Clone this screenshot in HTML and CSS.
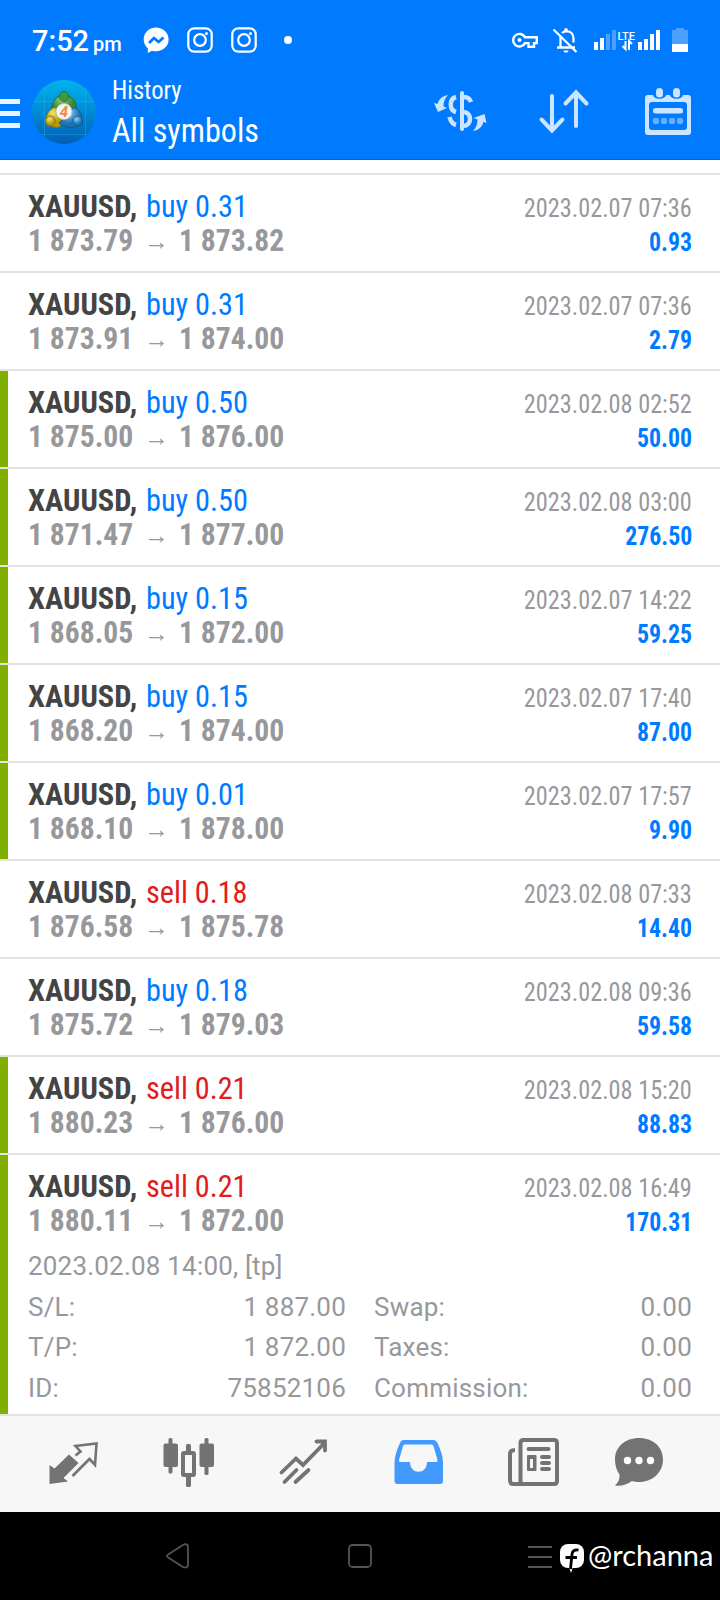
FILE: index.html
```html
<!DOCTYPE html>
<html lang="en">
<head>
<meta charset="utf-8">
<title>History</title>
<link rel="stylesheet" href="styles.css">
</head>
<body>
<header class="top">
  <div class="status">
    <div class="clock">7:52<small>pm</small></div>
    <svg class="notif" width="160" height="30" viewBox="140 25 160 30">
      <path fill="#fff" d="M156 27.500c-7 0-12.300 5.200-12.300 12 0 3.600 1.600 6.500 4.100 8.700v4.800l4.200-2.300c1.300.4 2.600.5 4 .5 7 0 12.600-5 12.600-11.700S163 27.500 156 27.500z"/>
      <path d="M149 43l5-5 4.500 4 5-4.500" fill="none" stroke="#007bff" stroke-width="2.800" stroke-linejoin="round"/>
      <g id="insta" fill="none" stroke="#fff" stroke-width="2.200"><rect x="188.300" y="28.300" width="23.400" height="23.400" rx="6"/><circle cx="200" cy="40" r="5.800"/><circle cx="206.500" cy="33.500" r="1.500" fill="#fff" stroke="none"/></g>
      <use href="#insta" x="44"/>
      <circle cx="288" cy="40" r="4" fill="#fff"/>
    </svg>
    <svg class="system" width="186" height="30" viewBox="506 25 186 30">
      <g fill="none" stroke="#fff" stroke-width="2.400"><path d="M525 37.300a6.300 6.300 0 1 0 0 5.800h3.500v3.700h5.500v-3.700h2.700v-5.800z"/></g><circle cx="519.500" cy="40" r="2" fill="#fff"/>
      <path d="M560.500 36v11.500M557 47.500h18M562 33c2-1.800 3-1.600 5-1.600 4 0 6.500 3 6.500 7v4" fill="none" stroke="#fff" stroke-width="2.300"/>
      <path d="M564 31c0-4 4-4 4 0zM563.500 50.500h5c-.5 3-4.500 3-5 0z" fill="#fff"/>
      <path d="M553.500 29.500L576.500 52" stroke="#fff" stroke-width="2.300"/>
      <path d="M594 42h4v8h-4zM600 38h4v12h-4zM638 42h4v8h-4zM644 39h4v11h-4zM650 34h4v16h-4zM656 30h4v20h-4z" fill="#fff"/>
      <path d="M606 34h4v16h-4zM612 30h4v20h-4z" fill="#4ca0ff"/>
      <text x="617.500" y="40" class="lte">LTE</text>
      <path d="M625.500 41v8l-3-3M629 50v-9l3 3" fill="none" stroke="#fff" stroke-width="2"/>
      <path d="M672 30h4v-2h8v2h4v14h-16z" fill="#4ca0ff"/><path d="M672 44h16v8h-16z" fill="#fff"/>
    </svg>
  </div>
  <div class="appbar">
    <svg class="menu" width="20" height="30" viewBox="0 0 20 30"><path d="M0 0h20v5H0zM0 12h20v5H0zM0 24h20v5H0z" fill="#e8f3ff"/></svg>
    <svg class="logo" width="64" height="64" viewBox="0 0 64 64">
      <defs>
        <linearGradient id="bg" x2="0" y2="1"><stop offset="0" stop-color="#00b4ea"/><stop offset=".55" stop-color="#0086d2"/><stop offset="1" stop-color="#005fb4"/></linearGradient>
        <radialGradient id="gr" cx=".4" cy=".25"><stop offset="0" stop-color="#8fcb70"/><stop offset="1" stop-color="#2f8a34"/></radialGradient>
        <radialGradient id="ye" cx=".4" cy=".3"><stop offset="0" stop-color="#f3e36a"/><stop offset="1" stop-color="#b59a10"/></radialGradient>
        <radialGradient id="bl" cx=".4" cy=".3"><stop offset="0" stop-color="#8ccdf0"/><stop offset="1" stop-color="#1b74b8"/></radialGradient>
        <clipPath id="disc"><circle cx="32" cy="32" r="32"/></clipPath>
      </defs>
      <g clip-path="url(#disc)"><path fill="url(#bg)" d="M0 0h64v64H0z"/><path d="M12.500 0v64M53.500 0v64M0 21.500h64M0 54.500h64" stroke="#3fb2e8" stroke-opacity=".35"/></g>
      <path d="M20 29c0-8 4-13 12-14 8 1 13 6 12 14l-5 5H24z" fill="url(#gr)" stroke="#256b35"/>
      <path d="M14 44c-1-8 2-14 9-17l8 10-3 10c-5 1-9 0-14-3z" fill="url(#ye)" stroke="#7c7119"/>
      <path d="M50 44c1-8-2-14-8-17l-9 10-6 6c6 5 15 6 23 1z" fill="url(#bl)" stroke="#17588b"/>
      <ellipse cx="32" cy="16.500" rx="4.500" ry="5" fill="#3f9a48" stroke="#256b35" stroke-width=".8"/>
      <circle cx="18.500" cy="41" r="5" fill="url(#ye)" stroke="#7c7119" stroke-width=".8"/>
      <circle cx="45.500" cy="41" r="5" fill="url(#bl)" stroke="#17588b" stroke-width=".8"/>
      <circle cx="32" cy="31.500" r="8" fill="#f4f4f4" stroke="#bbb" stroke-width=".8"/>
      <text x="32" y="37" text-anchor="middle" class="four">4</text>
    </svg>
    <div class="titles"><div class="t1"><span>History</span></div><div class="t2"><span>All symbols</span></div></div>
    <svg class="tools" width="260" height="52" viewBox="432 86 260 52">
      <g fill="none" stroke="#cce5ff" stroke-linecap="round" stroke-width="4">
        <path d="M462 93v36" />
        <path d="M456 97c-7 2-7 13 0 15M449.500 117c1 4 3 7 6.500 8M464 97c4 0 6 2 7 5M464 112c8 1 8 13 0 14" stroke-width="4.500" stroke-linecap="butt"/>
        <path d="M552 96v34M541.500 119.500l10.500 11 10.500-11M576 126V93M565.500 103.500l10.500-11 10.500 11"/>
      </g>
      <path d="M448 95c-6 1-9 4-10.500 9l-3.500-1 4 9 9-4-3.500-1.500c0-4 1-8 4.500-11.500zM473 131c6-1 9-4 10.500-9l3 1-2-9-11 4 4 1.500c0 4-1 8-4.500 11.500z" fill="#cce5ff"/>
      <path fill="#cce5ff" fill-rule="evenodd" d="M648 95h5c1 5 12 5 13 0h4c1 5 12 5 13 0h5a3 3 0 0 1 3 3v34a3 3 0 0 1-3 3h-40a3 3 0 0 1-3-3V98a3 3 0 0 1 3-3zM652 102a3 3 0 0 0-3 3v22a3 3 0 0 0 3 3h32a3 3 0 0 0 3-3v-22a3 3 0 0 0-3-3z"/>
      <rect x="656" y="88" width="7" height="9.500" rx="3.500" fill="#cce5ff"/><rect x="673" y="88" width="7" height="9.500" rx="3.500" fill="#cce5ff"/>
      <rect x="653" y="108" width="30" height="5.500" rx="2.500" fill="#cce5ff"/>
      <g fill="#66b0ff"><circle cx="656" cy="121" r="3.200"/><circle cx="664" cy="121" r="3.200"/><circle cx="672" cy="121" r="3.200"/><circle cx="680" cy="121" r="3.200"/></g>
    </svg>
  </div>
</header>
<main class="deals" id="deals"></main>
<nav class="tabs">
  <svg width="720" height="96" viewBox="0 1416 720 96">
    <g fill="#737373">
      <path d="M49.500 1465l5 3.500 14.500-14 9.500 8.500-15 15 4.500 3.500-18.500 2.500z"/>
      <path d="M75.500 1455.500l5-4-5-5.500 21-2.500-1.500 21.500-5.500-6-17 17" fill="none" stroke="#737373" stroke-width="2.600"/>
      <rect x="163.500" y="1443.500" width="14.500" height="23.500" rx="2"/><rect x="168.500" y="1438" width="4" height="35.500" rx="1.500"/>
      <rect x="199.500" y="1443.500" width="14.500" height="23.500" rx="2"/><rect x="204.500" y="1438" width="4" height="37" rx="1.500"/>
      <rect x="186" y="1444" width="5" height="43" rx="1.500"/><rect x="183" y="1453" width="11" height="22" rx="1" fill="#f7f7f7" stroke="#737373" stroke-width="4"/>
      <path d="M281.500 1472.500l14.500-14 7 6.500 21-21.500M316.500 1441.500h8.500v9M284.500 1482l12-12M295.500 1482l13-12" fill="none" stroke="#737373" stroke-width="3.800" stroke-linecap="round"/>
    </g>
    <path fill="#429aff" fill-rule="evenodd" d="M404 1440h29q3 0 4.500 3c3 7 5.500 13 5.500 20v18q0 3-3 3h-42.500q-3 0-3-3v-18c0-7 2.500-13 5.500-20q1-3 4-3zM405 1444.500q-1.500 0-2 1.500l-4 14q-.5 2 1 2h10c0 13 17 13 17 0h9q2 0 1.500-2l-4-14q-.5-1.500-2-1.500z"/>
    <g fill="none" stroke="#737373" stroke-width="4"><path d="M520.500 1484V1443q0-3 3-3h30.500q3 0 3 3v38q0 3-3 3h-41q-3 0-3-4v-26q0-4 5-4"/></g>
    <g fill="#737373"><rect x="526.500" y="1447" width="24" height="4" rx="2"/><rect x="540" y="1455" width="11" height="4" rx="2"/><rect x="540" y="1461" width="11" height="4" rx="2"/><rect x="540" y="1467" width="11" height="4" rx="2"/><path fill-rule="evenodd" d="M528 1455h7.500q1 0 1 1v14q0 1-1 1H528q-1 0-1-1v-14q0-1 1-1zM530 1459v9h3v-9z"/>
    <path d="M639 1438c14 0 24 9 24 21.500s-10 22.500-24 22.500c-2.500 0-5-.3-7-1-5 3.500-11 5.500-17 4.500 3.500-3 5-7 4.500-11-3-4-4.500-9-4.500-15 0-12.500 10-21.500 24-21.500z"/></g>
    <g fill="#fff"><circle cx="627.500" cy="1460.500" r="3.700"/><circle cx="639" cy="1460.500" r="3.700"/><circle cx="650.500" cy="1460.500" r="3.700"/></g>
  </svg>
</nav>
<footer class="system-nav">
  <svg width="588" height="88" viewBox="0 1512 588 88">
    <g fill="none" stroke="#555" stroke-width="1.800"><path d="M168.500 1554.300l14-9q5.500-3 5.500 2v17.500q0 4-5.500 2l-14-9q-3-1.700 0-3.500z"/><rect x="349" y="1545" width="22" height="22" rx="3.500"/><path d="M528 1547h24M528 1557h24M528 1567h24"/></g>
    <rect x="560" y="1544" width="24" height="24" rx="8" fill="#fff"/><path d="M569 1567h4l-2 6z" fill="#fff"/>
    <path d="M578.500 1550c-4-.5-6 1-6.500 4l-1.500 15M565.500 1557.500h11.500" fill="none" stroke="#000" stroke-width="2.800"/>
  </svg>
  <span class="handle">@rchanna</span>
</footer>
<script src="deals.js"></script>
</body>
</html>
```
FILE: styles.css
```css
* { box-sizing: border-box; }
body { margin: 0; width: 720px; height: 1600px; overflow: hidden; background: #fff; font-family: Roboto, "Noto Sans", sans-serif; }
svg { display: block; flex: none; }
.top { height: 160px; background: #007bff; border-bottom: 1px solid #0069d9; color: #fff; }
.status { height: 76px; padding: 25px 28px 0 32px; display: flex; }
.clock { width: 108px; font-size: 29px; font-weight: 500; line-height: 32px; white-space: nowrap; }
.clock small { font-size: 20px; margin-left: 4px; }
.system { margin-left: auto; }
.lte { font: 500 11px Roboto, sans-serif; fill: #fff; }
.appbar { display: flex; }
.menu { margin-top: 23px; }
.logo { margin: 4px 0 0 12px; }
.four { font: italic 700 15px Roboto, sans-serif; fill: #f08a3c; }
.titles { width: 336px; padding-left: 16px; }
.titles span, .fit { display: inline-block; white-space: nowrap; transform-origin: 0 50%; }
.titles, .line, .right { font-family: "Roboto Condensed", Roboto, sans-serif; font-stretch: 75%; }
.t1 { font-size: 26px; line-height: 28px; }
.t2 { font-size: 34px; line-height: 53px; }
.titles span { transform: scaleX(.946); }
.tools { margin-top: 10px; }
.deals { padding-top: 13px; }
.deal { border-top: 2px solid #e3e3e3; }
.body { height: 96px; border-left: 8px solid transparent; padding: 14px 28px 0 20px; display: flex; justify-content: space-between; }
.closed { border-left-color: #7fb000; }
.line { display: grid; grid-template-columns: 118px 33px 130px; height: 34px; line-height: 34px; font-size: 32px; color: #97989c; font-weight: 700; }
.line.head { grid-template-columns: 118px 160px; color: #444; }
.symbol { transform: scaleX(.953); }
.side { transform: scaleX(.945); font-weight: 400; color: #007bff; }
.side.sell { color: #e21b1b; }
.price { transform: scaleX(.925); }
.arrow { font-family: "Liberation Sans", sans-serif; font-weight: 400; font-size: 25px; padding-top: 1px; margin-left: -2px; }
.right { padding-top: 2px; text-align: right; font-size: 26px; line-height: 34px; color: #97989c; }
.right .fit { transform-origin: 100% 50%; }
.time { transform: scaleX(.934); }
.profit { transform: scaleX(.916); font-weight: 700; color: #007bff; }
.details { border-left: 8px solid #7fb000; height: 169px; margin-top: -6px; padding: 1px 28px 0 20px; font-size: 26px; line-height: 40px; color: #97989c; letter-spacing: .2px; }
.details dl { margin: 0; padding-top: .5px; display: grid; grid-template-columns: 1fr 1fr; column-gap: 28px; }
.details dl div { display: flex; justify-content: space-between; height: 40.5px; }
.details dd { margin: 0; }
.tabs { height: 98px; border-top: 2px solid #e3e3e3; background: #f7f7f7; }
.system-nav { height: 88px; background: #000; display: flex; }
.handle { color: #fff; font: 29px/86px Lato, sans-serif; white-space: nowrap; }
```
FILE: deals.js
```js
const deals = [
  ["buy", "0.31", "1 873.79", "1 873.82", "2023.02.07 07:36", "0.93", 0],
  ["buy", "0.31", "1 873.91", "1 874.00", "2023.02.07 07:36", "2.79", 0],
  ["buy", "0.50", "1 875.00", "1 876.00", "2023.02.08 02:52", "50.00", 1],
  ["buy", "0.50", "1 871.47", "1 877.00", "2023.02.08 03:00", "276.50", 1],
  ["buy", "0.15", "1 868.05", "1 872.00", "2023.02.07 14:22", "59.25", 1],
  ["buy", "0.15", "1 868.20", "1 874.00", "2023.02.07 17:40", "87.00", 1],
  ["buy", "0.01", "1 868.10", "1 878.00", "2023.02.07 17:57", "9.90", 1],
  ["sell", "0.18", "1 876.58", "1 875.78", "2023.02.08 07:33", "14.40", 0],
  ["buy", "0.18", "1 875.72", "1 879.03", "2023.02.08 09:36", "59.58", 0],
  ["sell", "0.21", "1 880.23", "1 876.00", "2023.02.08 15:20", "88.83", 1],
  ["sell", "0.21", "1 880.11", "1 872.00", "2023.02.08 16:49", "170.31", 1]
];
const details = `<div class="details">2023.02.08 14:00, [tp]<dl>
<div><dt>S/L:</dt><dd>1 887.00</dd></div><div><dt>Swap:</dt><dd>0.00</dd></div>
<div><dt>T/P:</dt><dd>1 872.00</dd></div><div><dt>Taxes:</dt><dd>0.00</dd></div>
<div><dt>ID:</dt><dd>75852106</dd></div><div><dt>Commission:</dt><dd>0.00</dd></div></dl></div>`;
document.getElementById("deals").innerHTML = deals.map(([side, lots, open, close, time, profit, tp], i) => `
<section class="deal"><div class="body ${tp ? "closed" : ""}"><div>
<div class="line head"><span><span class="fit symbol">XAUUSD,</span></span><span><span class="fit side ${side}">${side} ${lots}</span></span></div>
<div class="line"><span><span class="fit price">${open}</span></span><span class="arrow">→</span><span><span class="fit price">${close}</span></span></div>
</div><div class="right"><div><span class="fit time">${time}</span></div><div><span class="fit profit">${profit}</span></div></div></div>
${i === deals.length - 1 ? details : ""}</section>`).join("");
```
